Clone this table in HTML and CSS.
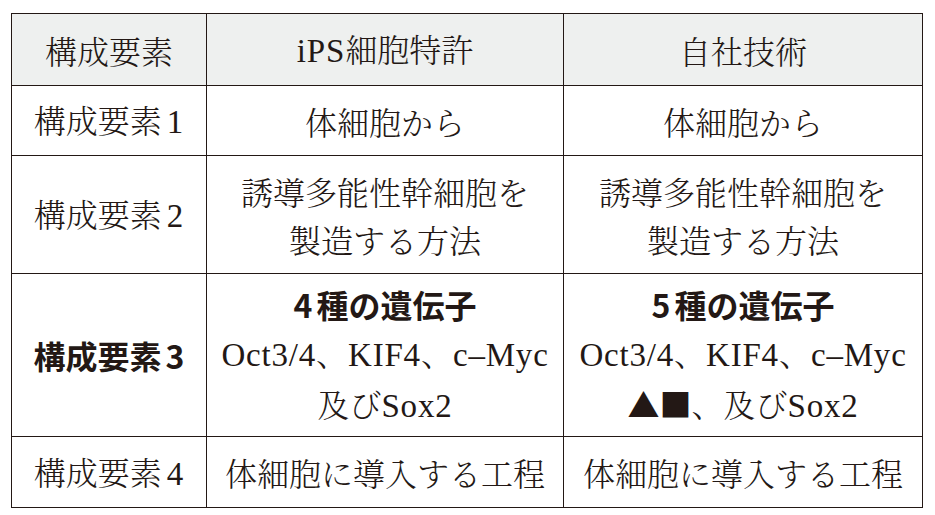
FILE: index.html
```html
<!DOCTYPE html>
<html lang="ja">
<head>
<meta charset="utf-8">
<link rel="stylesheet" href="styles.css">
</head>
<body>
<table class="cmp">
  <colgroup>
    <col class="c1"><col class="c2"><col class="c3">
  </colgroup>
  <thead>
    <tr class="r-head">
      <th>構成要素</th>
      <th><span class="lat">iPS</span>細胞特許</th>
      <th>自社技術</th>
    </tr>
  </thead>
  <tbody>
    <tr class="r1">
      <td>構成要素<span class="lat num">1</span></td>
      <td>体細胞から</td>
      <td>体細胞から</td>
    </tr>
    <tr class="r2">
      <td>構成要素<span class="lat num">2</span></td>
      <td>誘導多能性幹細胞を<br>製造する方法</td>
      <td>誘導多能性幹細胞を<br>製造する方法</td>
    </tr>
    <tr class="r3">
      <td class="bold">構成要素<span class="bnum">3</span></td>
      <td><span class="bold"><span class="bdig">4</span>種の遺伝子</span><br><span class="lat">Oct3/4</span>、<span class="lat">KIF4</span>、<span class="lat">c–Myc</span><br>及び<span class="lat">Sox2</span></td>
      <td><span class="bold"><span class="bdig">5</span>種の遺伝子</span><br><span class="lat">Oct3/4</span>、<span class="lat">KIF4</span>、<span class="lat">c–Myc</span><br><span class="sym">▲■</span>、及び<span class="lat">Sox2</span></td>
    </tr>
    <tr class="r4">
      <td>構成要素<span class="lat num">4</span></td>
      <td>体細胞に導入する工程</td>
      <td>体細胞に導入する工程</td>
    </tr>
  </tbody>
</table>
</body>
</html>
```
FILE: styles.css
```css
html, body {
  margin: 0;
  padding: 0;
  background: #ffffff;
}
body {
  padding: 13px 0 0 11px;
  font-family: "Noto Serif CJK JP", "Noto Sans CJK JP", sans-serif;
  color: #231815;
}
.cmp {
  border-collapse: collapse;
  table-layout: fixed;
  width: 911px;
  font-size: 32px;
  line-height: 48px;
}
.c1 { width: 195px; }
.c2 { width: 357px; }
.c3 { width: 359px; }
.cmp th,
.cmp td {
  border: 1.5px solid #231815;
  text-align: center;
  vertical-align: middle;
  padding: 0;
  font-weight: 300;
}
.r-head th {
  background: #eef0ef;
  height: 71px;
}
.r1 td { height: 69px; }
.r2 td { height: 117px; }
.r3 td { height: 162px; }
.r4 td { height: 70px; }
.cmp .lat {
  font-family: "Liberation Serif", "Times New Roman", "DejaVu Serif", serif;
  font-weight: 400;
  font-size: 33px;
  letter-spacing: 0.8px;
}
.cmp .num {
  margin-left: 5px;
}
.cmp .bold {
  font-family: "Noto Sans CJK JP", sans-serif;
  font-weight: 700;
}
.cmp .bnum {
  margin-left: 4px;
}
.cmp .bdig {
  margin-right: 4px;
}
.cmp .sym {
  font-family: "Noto Sans CJK JP", sans-serif;
  font-weight: 400;
}
```
